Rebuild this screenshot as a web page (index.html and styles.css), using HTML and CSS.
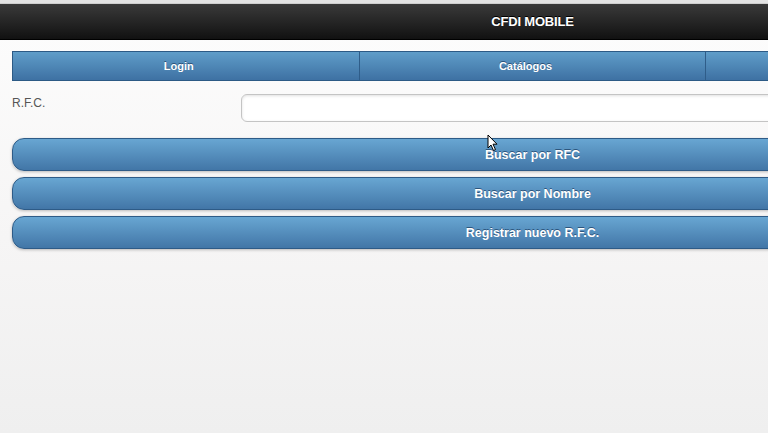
FILE: index.html
```html
<!DOCTYPE html>
<html lang="es">
<head>
  <meta charset="UTF-8" />
  <title>CFDI Mobile</title>
  <meta name="viewport" content="width=device-width, initial-scale=1.0" />
  <link rel="stylesheet" href="styles.css">
</head>
<body>
  <div class="top-strip"></div>

  <div class="page">
    <header class="bar">
      <h1>CFDI MOBILE</h1>
    </header>

    <div class="content">
      <nav class="navbar">
        <a href="#" class="nav-item">Login</a>
        <a href="#" class="nav-item">Catálogos</a>
        <a href="#" class="nav-item"></a>
      </nav>

      <div class="field">
        <label for="rfc">R.F.C.</label>
        <input type="text" id="rfc" name="rfc" />
      </div>

      <div class="actions">
        <button class="btn">Buscar por RFC</button>
        <button class="btn">Buscar por Nombre</button>
        <button class="btn">Registrar nuevo R.F.C.</button>
      </div>
    </div>
  </div>

  <!-- mouse pointer -->
  <svg class="pointer" width="12" height="18" viewBox="0 0 12 18">
    <path d="M1 1 L1 14 L4 11 L6.5 16.5 L8.5 15.6 L6 10.2 L10 10.2 Z" fill="#fff" stroke="#000" stroke-width="1" stroke-linejoin="round"/>
  </svg>
</body>
</html>
```

FILE: styles.css
```css
* {
  box-sizing: border-box;
  margin: 0;
  padding: 0;
}

html, body {
  height: 100%;
}

body {
  font-family: "Liberation Sans", Arial, sans-serif;
  background: linear-gradient(to bottom, #fdfdfd 0%, #f6f5f5 55%, #efefef 100%);
  overflow: hidden;
  position: relative;
}

.top-strip {
  height: 4px;
  background: #e4e4e4;
  border-bottom: 1px solid #cfcfcf;
}

.page {
  width: 1065px;
}

/* header */
.bar {
  height: 36px;
  background: linear-gradient(to bottom, #3a3a3a, #111111);
  border-bottom: 1px solid #000;
  display: flex;
  align-items: center;
  justify-content: center;
}

.bar h1 {
  color: #fff;
  font-size: 13px;
  font-weight: bold;
  text-shadow: 0 -1px 0 #000;
  letter-spacing: -0.2px;
}

.content {
  padding: 11px 12px;
}

/* navbar */
.navbar {
  display: flex;
  height: 30px;
  border: 1px solid #2c5a85;
  background: linear-gradient(to bottom, #5f9dc9, #3e71a3);
}

.nav-item {
  flex: 1;
  display: flex;
  align-items: center;
  justify-content: center;
  padding-right: 14px;
  color: #fff;
  font-size: 11px;
  font-weight: bold;
  text-decoration: none;
  text-shadow: 0 -1px 0 #2a5279;
  border-left: 1px solid #2f5d89;
}

.nav-item:first-child {
  border-left: none;
}

/* form */
.field {
  display: flex;
  margin-top: 13px;
}

.field label {
  width: 229px;
  padding-top: 2px;
  font-size: 12px;
  color: #555;
}

.field input {
  flex: 1;
  height: 28px;
  border: 1px solid #c4c4c4;
  border-radius: 6px;
  background: #fff;
  box-shadow: inset 0 1px 3px rgba(0, 0, 0, 0.12);
}

.actions {
  display: flex;
  flex-direction: column;
  gap: 6px;
  margin-top: 16px;
}

.btn {
  height: 33px;
  border: 1px solid #2e5b87;
  border-radius: 12px;
  background: linear-gradient(to bottom, #68a6d2, #4276a7);
  color: #fff;
  font-family: "Liberation Sans", Arial, sans-serif;
  font-size: 12.5px;
  font-weight: bold;
  text-shadow: 0 -1px 0 #2d567e;
  box-shadow: 0 1px 3px rgba(0, 0, 0, 0.25);
  cursor: pointer;
}

.pointer {
  position: absolute;
  left: 487px;
  top: 134px;
}
```
